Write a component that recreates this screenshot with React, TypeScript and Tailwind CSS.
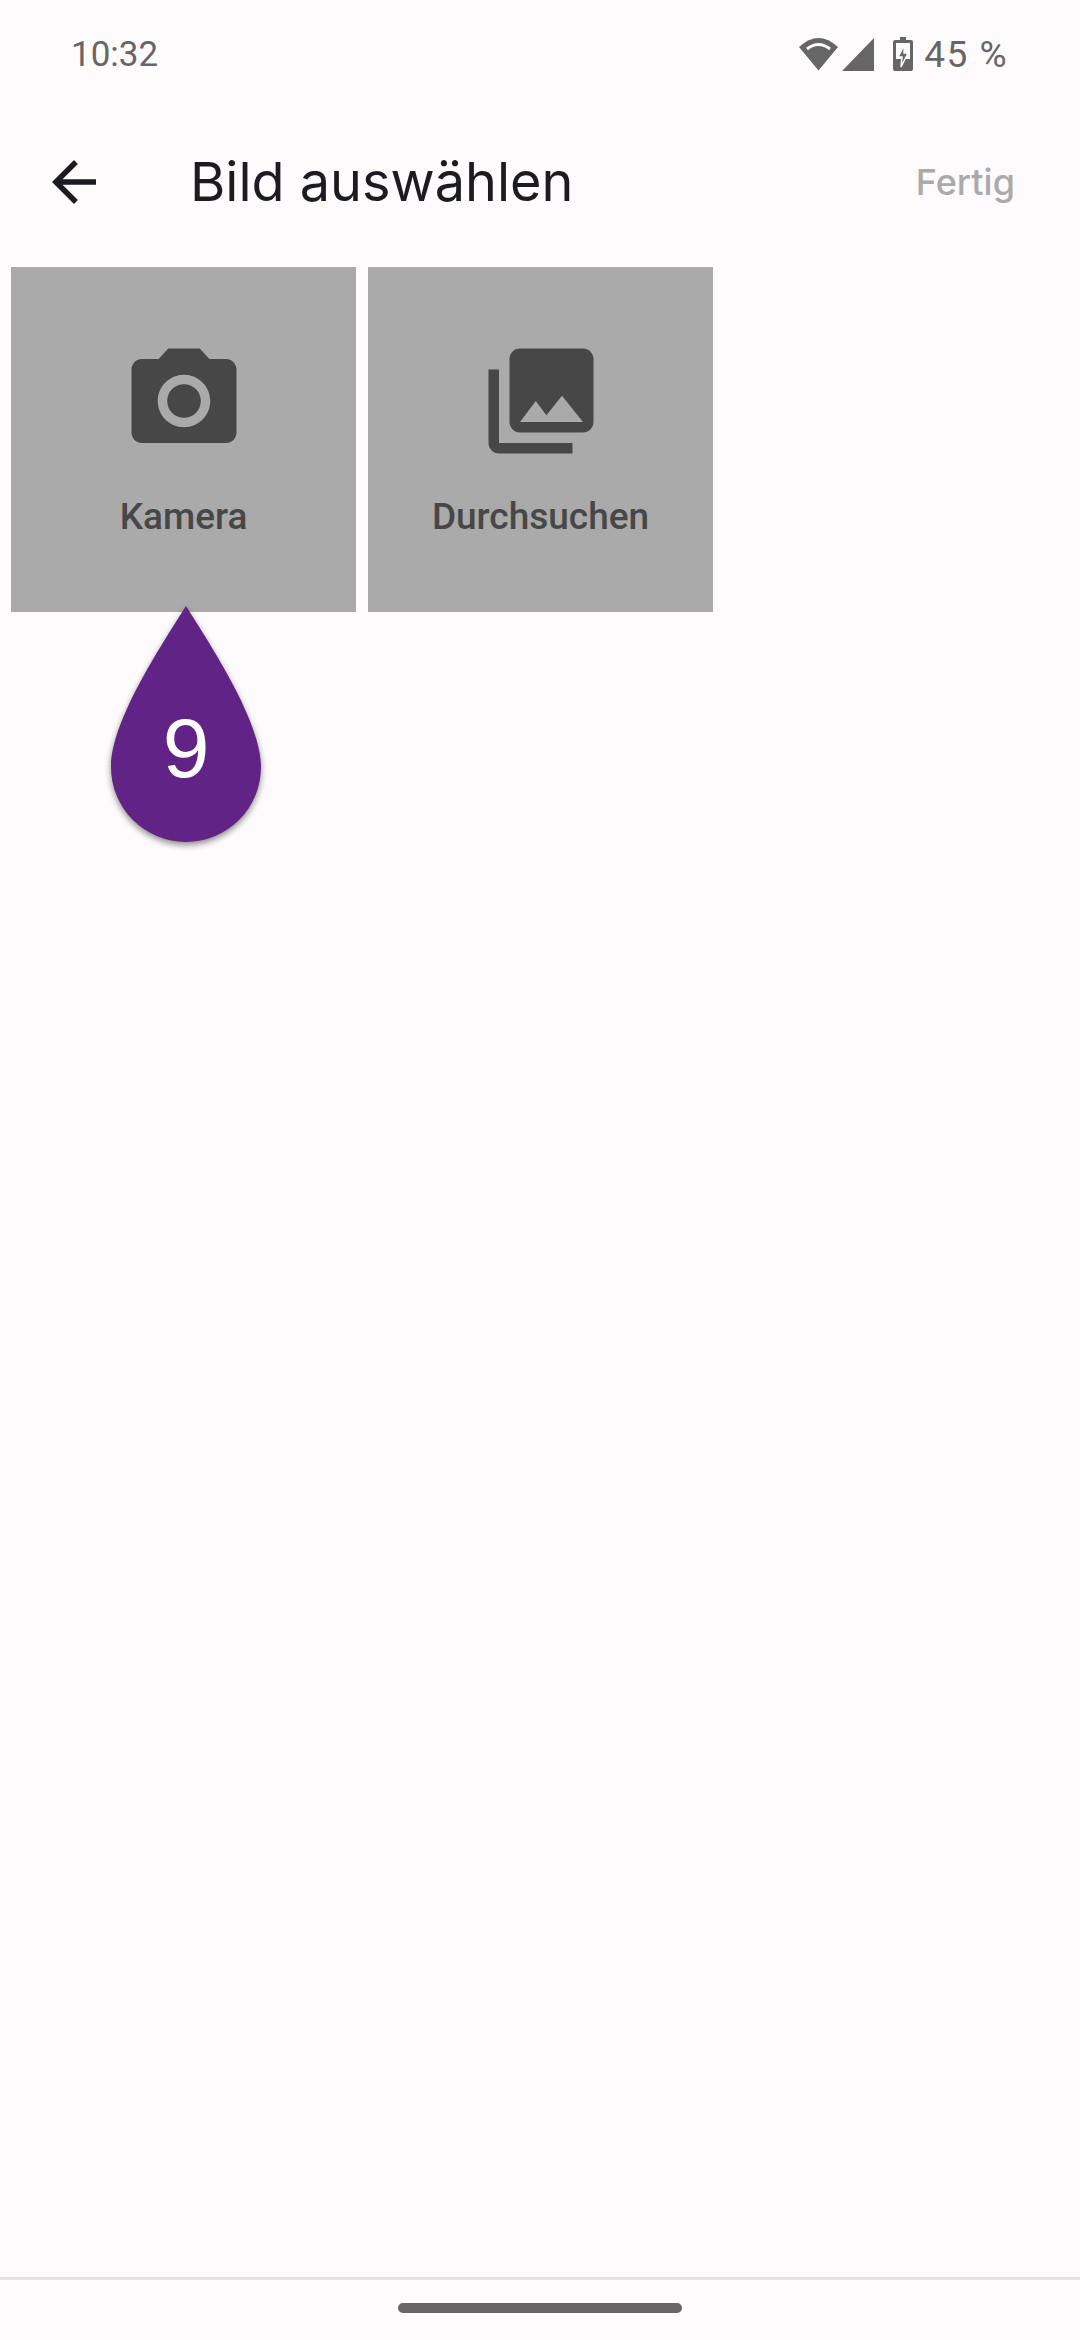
const TILES = [
  {
    label: 'Kamera',
    icon: 'M9 2L7.17 4H4c-1.1 0-2 .9-2 2v12c0 1.1.9 2 2 2h16c1.1 0 2-.9 2-2V6c0-1.1-.9-2-2-2h-3.17L15 2H9zm3 15c-2.76 0-5-2.24-5-5s2.24-5 5-5 5 2.24 5 5-2.24 5-5 5zM12 8.8a3.2 3.2 0 1 0 0 6.4 3.2 3.2 0 0 0 0-6.4z',
  },
  {
    label: 'Durchsuchen',
    icon: 'M22 16V4c0-1.1-.9-2-2-2H8c-1.1 0-2 .9-2 2v12c0 1.1.9 2 2 2h12c1.1 0 2-.9 2-2zm-11-4l2.03 2.71L16 11l4 5H8l3-4zM2 6v14c0 1.1.9 2 2 2h14v-2H4V6H2z',
  },
];

function StatusBar() {
  return (
    <div className="flex h-[108px] items-center justify-between pl-[71px] pr-[72px] text-[35px] leading-none text-[#666666]">
      <span>10:32</span>
      <div className="flex items-center">
        {/* wifi */}
        <svg width="39" height="33" viewBox="0 0 39 33" className="mr-[4px]">
          <path d="M0 9Q19.5-9 39 9L19.5 32.5Z" fill="#666666" />
          <path d="M8 11Q19.5 2 31 11" fill="none" stroke="#fefbfd" strokeWidth="3" />
        </svg>
        {/* signal */}
        <svg width="32" height="33" viewBox="0 0 32 33" className="mr-[19px]">
          <path d="M32 0V33H0Z" fill="#666666" />
        </svg>
        {/* battery charging */}
        <svg width="20" height="34" viewBox="0 0 20 34" className="mr-[11px]">
          <path
            fillRule="evenodd"
            d="M7 0h6v3h5a2 2 0 0 1 2 2v27a2 2 0 0 1-2 2H2a2 2 0 0 1-2-2V5a2 2 0 0 1 2-2h5zM3 6v26h14V6z"
            fill="#666666"
          />
          <path d="M3 22h14v10H3z" fill="#666666" />
          <path d="M11.5 8L5 20h4l-1 10 7-14h-4z" fill="#666666" stroke="#fefbfd" strokeWidth="1.5" />
        </svg>
        <span className="text-[37px] tracking-[1.5px]">45 %</span>
      </div>
    </div>
  );
}

function Tile({ label, icon }: { label: string; icon: string }) {
  return (
    <div className="flex h-[345px] w-[345px] flex-col items-center bg-[#aaaaaa] pt-[71px] text-[#474747]">
      <svg width="126" height="126" viewBox="0 0 24 24" fill="currentColor">
        <path fillRule="evenodd" d={icon} />
      </svg>
      <span className="mt-[29px] text-[37px] font-medium leading-[48px]">{label}</span>
    </div>
  );
}

export default function App() {
  return (
    <div className="relative flex h-[2340px] w-[1080px] flex-col overflow-hidden bg-[#fefbfd] font-['Roboto',sans-serif]">
      <StatusBar />

      <header className="flex h-[148px] items-center">
        <svg width="66" height="66" viewBox="0 0 24 24" className="ml-[41px] text-[#1c1b1f]" fill="currentColor">
          <path d="M20 11H7.83l5.59-5.59L12 4l-8 8 8 8 1.41-1.41L7.83 13H20v-2z" />
        </svg>
        <h1 className="ml-[83px] font-['Inter',sans-serif] text-[54px] font-normal leading-[72px] text-[#1c1b1f]">
          Bild auswählen
        </h1>
        <button className="ml-auto mr-[65px] font-['Inter',sans-serif] text-[36px] font-medium leading-[44px] text-[#aaaaaa]">
          Fertig
        </button>
      </header>

      <div className="mt-[11px] flex gap-[12px] pl-[11px]">
        {TILES.map(t => (
          <Tile key={t.label} label={t.label} icon={t.icon} />
        ))}
      </div>

      {/* teardrop handle over the first tile */}
      <div className="absolute left-[111px] top-[606px] h-[238px] w-[150px]">
        <svg width="150" height="238" viewBox="0 0 150 238" className="drop-shadow-[0_3px_3px_rgba(0,0,0,0.45)]">
          <path d="M75 0C100 40 150 115 150 161A75 75 0 0 1 0 161C0 115 50 40 75 0Z" fill="#612385" />
        </svg>
        <span className="absolute inset-x-0 top-[94px] text-center font-['Liberation_Sans',sans-serif] text-[84px] leading-[96px] text-white">
          9
        </span>
      </div>

      <div className="mt-auto flex h-[63px] justify-center border-t-[3px] border-[#e4e2e4] pt-[23px]">
        <div className="h-[10px] w-[284px] rounded-full bg-[#666666]" />
      </div>
    </div>
  );
}
